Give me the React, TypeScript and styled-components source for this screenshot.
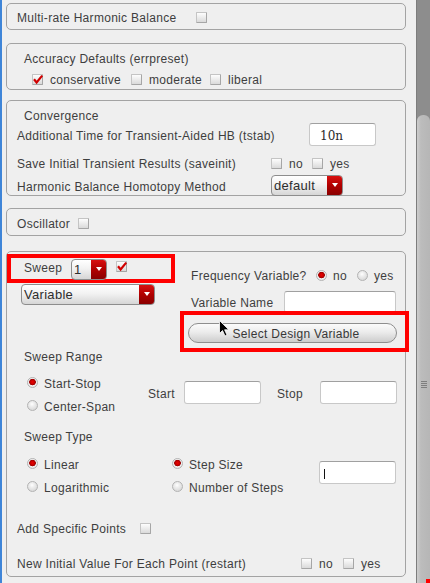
import React from "react";
import styled, { createGlobalStyle } from "styled-components";

const GlobalStyle = createGlobalStyle`
  html, body { margin: 0; padding: 0; background: #efefef; }
  body {
    font-family: "Liberation Sans", Arial, sans-serif;
    font-size: 12px;
    color: #3e3e3e;
    letter-spacing: 0.3px;
  }
  * { box-sizing: border-box; }
`;

const Screen = styled.div`
  width: 430px;
  height: 583px;
  display: flex;
  overflow: hidden;
  position: relative;
  background: #efefef;
`;

const Main = styled.div`
  width: 416px;
  flex: none;
  border-left: 2px solid #3f85d8;
  padding: 3px 0 0 4px;
  display: flex;
  flex-direction: column;
`;

const Panel = styled.div<{ $mt?: number; $pb?: number }>`
  width: 400px;
  flex: none;
  border: 1px solid #a3a3a3;
  border-radius: 5px;
  margin-top: ${(p) => p.$mt ?? 0}px;
  padding-bottom: ${(p) => p.$pb ?? 0}px;
  display: flex;
  flex-direction: column;
  position: relative;
`;

const Row = styled.div<{ $h?: number; $mt?: number; $pl?: number; $mb?: number }>`
  display: flex;
  align-items: center;
  height: ${(p) => p.$h ?? 16}px;
  margin-top: ${(p) => p.$mt ?? 0}px;
  margin-bottom: ${(p) => p.$mb ?? 0}px;
  padding-left: ${(p) => p.$pl ?? 10}px;
  flex: none;
`;

const Label = styled.span<{ $w?: number; $ml?: number }>`
  display: inline-block;
  white-space: nowrap;
  line-height: 16px;
  padding-top: 2px;
  flex: none;
  ${(p) => (p.$w !== undefined ? `width: ${p.$w}px;` : "")}
  margin-left: ${(p) => p.$ml ?? 0}px;
`;

const BoxWrap = styled.span<{ $ml?: number; $mt?: number }>`
  position: relative;
  display: inline-block;
  width: 11px;
  height: 11px;
  flex: none;
  margin-left: ${(p) => p.$ml ?? 0}px;
  margin-top: ${(p) => p.$mt ?? 0}px;
  margin-right: 7px;
  border: 1px solid #a6a6a6;
  border-top-color: #c4c4c4;
  border-left-color: #c4c4c4;
  border-radius: 1px;
  background: linear-gradient(#fdfdfd, #dadada);
`;

const CheckMark = styled.svg`
  position: absolute;
  left: 0px;
  top: 0px;
  width: 10px;
  height: 10px;
  overflow: visible;
`;

const Check = ({ checked, ml, mt }: { checked?: boolean; ml?: number; mt?: number }) => (
  <BoxWrap $ml={ml} $mt={mt}>
    {checked && (
      <CheckMark viewBox="0 0 10 10">
        <path d="M1 4.2 L3.6 7.4 L9.2 0.6" fill="none" stroke="#d00000" strokeWidth="2.2" strokeLinejoin="miter" />
      </CheckMark>
    )}
  </BoxWrap>
);

const RadioDot = styled.span<{ $on?: boolean; $ml?: number }>`
  display: inline-block;
  width: 11px;
  height: 11px;
  flex: none;
  border-radius: 50%;
  margin-left: ${(p) => p.$ml ?? 0}px;
  margin-right: 6px;
  border: 1px solid #b3b3b3;
  background: ${(p) =>
    p.$on
      ? "radial-gradient(circle at 50% 45%, #f00000 0, #c00000 2.2px, #9a0000 3px, #f4f4f4 3.6px, #d2d2d2 100%)"
      : "radial-gradient(circle at 45% 35%, #ffffff 0, #f0f0f0 2px, #cfcfcf 100%)"};
`;

const DropBox = styled.div<{ $w: number; $ml?: number; $mt?: number }>`
  display: flex;
  width: ${(p) => p.$w}px;
  height: 21px;
  flex: none;
  margin-left: ${(p) => p.$ml ?? 0}px;
  margin-top: ${(p) => p.$mt ?? 0}px;
  border: 1px solid #8d8d8d;
  border-radius: 4px;
  overflow: hidden;
  background: linear-gradient(#ffffff, #f2f2f2 45%, #d6d6d6);
`;

const DropText = styled.span`
  flex: 1;
  padding-left: 2px;
  line-height: 20px;
  font-size: 13px;
  color: #2e2e2e;
  white-space: nowrap;
  overflow: hidden;
`;

const DropArrow = styled.span`
  width: 15px;
  flex: none;
  display: flex;
  align-items: center;
  justify-content: center;
  background: linear-gradient(#d81010, #b00000 50%, #8a0000);
  &::after {
    content: "";
    display: block;
    margin-top: -2px;
    border-left: 3.5px solid transparent;
    border-right: 3.5px solid transparent;
    border-top: 4px solid #ffffff;
  }
`;

const Dropdown = ({ w, text, ml, mt }: { w: number; text: string; ml?: number; mt?: number }) => (
  <DropBox $w={w} $ml={ml} $mt={mt}>
    <DropText>{text}</DropText>
    <DropArrow />
  </DropBox>
);

const TextField = styled.div<{ $w: number; $h?: number; $ml?: number }>`
  width: ${(p) => p.$w}px;
  height: ${(p) => p.$h ?? 23}px;
  flex: none;
  margin-left: ${(p) => p.$ml ?? 0}px;
  background: #ffffff;
  border: 1px solid #c8c8c8;
  border-top-color: #a0a0a0;
  border-radius: 3px;
  font-family: "DejaVu Serif", "Liberation Serif", serif;
  font-size: 12px;
  letter-spacing: 0;
  color: #2a2a2a;
  padding: 2px 0 0 10px;
  display: flex;
  align-items: center;
`;

const Caret = styled.span`
  display: inline-block;
  width: 1px;
  height: 10px;
  margin-left: -6px;
  background: #111;
`;

const Highlight = styled.div<{ $w: number; $h: number; $mt?: number; $mr?: number }>`
  width: ${(p) => p.$w}px;
  height: ${(p) => p.$h}px;
  flex: none;
  border: 4px solid #ff0000;
  margin-top: ${(p) => p.$mt ?? 0}px;
  margin-right: ${(p) => p.$mr ?? 0}px;
  display: flex;
`;

const PillButton = styled.div`
  width: 209px;
  height: 20px;
  margin: 8px 0 0 4px;
  border: 1px solid #8e8e8e;
  border-radius: 10px;
  background: linear-gradient(#fbfbfb, #ececec 45%, #cdcdcd);
  display: flex;
  align-items: center;
  justify-content: center;
  padding-left: 7px;
  padding-top: 1px;
  line-height: 16px;
  color: #383838;
  white-space: nowrap;
`;

const Top = styled.div`
  display: flex;
  flex: none;
`;

const LeftCol = styled.div`
  width: 173px;
  flex: none;
  display: flex;
  flex-direction: column;
`;

const RightCol = styled.div`
  width: 229px;
  flex: none;
  margin-right: -5px;
  display: flex;
  flex-direction: column;
`;

const SweepRow = styled.div`
  display: flex;
  align-items: flex-start;
  padding-left: 13px;
`;

const Section = styled.div<{ $mt?: number }>`
  display: flex;
  flex: none;
  margin-top: ${(p) => p.$mt ?? 0}px;
`;

const RadioCol = styled.div<{ $w: number; $pl?: number }>`
  width: ${(p) => p.$w}px;
  flex: none;
  display: flex;
  flex-direction: column;
  padding-left: ${(p) => p.$pl ?? 20}px;
`;

const RadioRow = styled.div`
  height: 23px;
  display: flex;
  align-items: center;
`;

const FieldArea = styled.div<{ $mt: number }>`
  display: flex;
  align-items: center;
  height: 23px;
  margin-top: ${(p) => p.$mt}px;
`;

const Cursor = styled.svg`
  position: absolute;
  left: 212px;
  top: 68px;
  width: 11px;
  height: 17px;
`;

const ScrollBar = styled.div`
  width: 14px;
  flex: none;
  border-left: 1px solid #7d7d7d;
  background: #8d8d8d;
  padding-top: 115px;
  display: flex;
  flex-direction: column;
  position: relative;
`;

const Thumb = styled.div`
  flex: 1;
  background: linear-gradient(90deg, #cdcdcd, #bcbcbc 30%, #b6b6b6);
  border-radius: 6px 6px 0 0;
  display: flex;
  flex-direction: column;
  align-items: center;
  padding-top: 266px;
  gap: 1px;
`;

const Grip = styled.span`
  width: 6px;
  height: 1px;
  margin-left: 1px;
  background: #7e7e7e;
`;

const CornerMark = styled.span`
  position: absolute;
  right: 0;
  bottom: 0;
  width: 4px;
  height: 4px;
  background: #ff0000;
`;

export default function App() {
  return (
    <>
      <GlobalStyle />
      <Screen>
        <Main>
          <Panel $pb={4}>
            <Row $h={16} $mt={5} $pl={10}>
              <Label $w={179}>Multi-rate Harmonic Balance</Label>
              <Check />
            </Row>
          </Panel>

          <Panel $mt={13} $pb={2}>
            <Row $h={16} $mt={6} $pl={17}>
              <Label>Accuracy Defaults (errpreset)</Label>
            </Row>
            <Row $h={16} $mt={5} $pl={25}>
              <Check checked />
              <Label $w={81}>conservative</Label>
              <Check />
              <Label $w={61}>moderate</Label>
              <Check />
              <Label>liberal</Label>
            </Row>
          </Panel>

          <Panel $mt={10}>
            <Row $h={16} $mt={6} $pl={17}>
              <Label>Convergence</Label>
            </Row>
            <Row $h={23} $pl={10}>
              <Label $w={292}>Additional Time for Transient-Aided HB (tstab)</Label>
              <TextField $w={67}>10n</TextField>
            </Row>
            <Row $h={16} $mt={9} $pl={10}>
              <Label $w={254}>Save Initial Transient Results (saveinit)</Label>
              <Check />
              <Label $w={23}>no</Label>
              <Check />
              <Label>yes</Label>
            </Row>
            <Row $h={21} $mt={4} $mb={-1} $pl={10}>
              <Label $w={254}>Harmonic Balance Homotopy Method</Label>
              <Dropdown w={72} text="default" />
            </Row>
          </Panel>

          <Panel $mt={12} $pb={4}>
            <Row $h={16} $mt={6} $pl={10}>
              <Label $w={61}>Oscillator</Label>
              <Check />
            </Row>
          </Panel>

          <Panel $mt={15} $pb={5}>
            <Top>
              <LeftCol>
                <Highlight $w={168} $h={29} $mt={2}>
                  <SweepRow>
                    <Label $w={47}>Sweep</Label>
                    <Dropdown w={36} text="1" mt={1} />
                    <Check checked ml={9} mt={3} />
                  </SweepRow>
                </Highlight>
                <Dropdown w={134} text="Variable" ml={14} mt={1} />
              </LeftCol>
              <RightCol>
                <Row $h={20} $mt={13} $pl={11}>
                  <Label $w={125}>Frequency Variable?</Label>
                  <RadioDot $on />
                  <Label $w={24}>no</Label>
                  <RadioDot />
                  <Label>yes</Label>
                </Row>
                <Row $h={22} $mt={6} $pl={11}>
                  <Label $w={93}>Variable Name</Label>
                  <TextField $w={112} $h={22} />
                </Row>
                <Highlight $w={229} $h={41} $mt={-2}>
                  <PillButton>Select Design Variable</PillButton>
                </Highlight>
              </RightCol>
            </Top>

            <Row $h={16} $mt={-4} $pl={17}>
              <Label>Sweep Range</Label>
            </Row>
            <Section $mt={7}>
              <RadioCol $w={141}>
                <RadioRow>
                  <RadioDot $on />
                  <Label>Start-Stop</Label>
                </RadioRow>
                <RadioRow>
                  <RadioDot />
                  <Label>Center-Span</Label>
                </RadioRow>
              </RadioCol>
              <FieldArea $mt={10}>
                <Label $w={36}>Start</Label>
                <TextField $w={77} />
                <Label $w={43} $ml={16}>Stop</Label>
                <TextField $w={77} />
              </FieldArea>
            </Section>

            <Row $h={16} $mt={11} $pl={17}>
              <Label>Sweep Type</Label>
            </Row>
            <Section $mt={8}>
              <RadioCol $w={165}>
                <RadioRow>
                  <RadioDot $on />
                  <Label>Linear</Label>
                </RadioRow>
                <RadioRow>
                  <RadioDot />
                  <Label>Logarithmic</Label>
                </RadioRow>
              </RadioCol>
              <RadioCol $w={147} $pl={0}>
                <RadioRow>
                  <RadioDot $on />
                  <Label>Step Size</Label>
                </RadioRow>
                <RadioRow>
                  <RadioDot />
                  <Label>Number of Steps</Label>
                </RadioRow>
              </RadioCol>
              <FieldArea $mt={9}>
                <TextField $w={77}>
                  <Caret />
                </TextField>
              </FieldArea>
            </Section>

            <Row $h={16} $mt={22} $pl={10}>
              <Label $w={123}>Add Specific Points</Label>
              <Check />
            </Row>
            <Row $h={16} $mt={19} $pl={10}>
              <Label $w={284}>New Initial Value For Each Point (restart)</Label>
              <Check />
              <Label $w={24}>no</Label>
              <Check />
              <Label>yes</Label>
            </Row>

            <Cursor viewBox="0 0 11 17">
              <path d="M0.5 0.5 L0.5 13.5 L3.5 10.5 L6 16 L8 15 L5.6 9.8 L9.8 9.8 Z" fill="#000" stroke="#fff" strokeWidth="0.8" />
            </Cursor>
          </Panel>
        </Main>
        <ScrollBar>
          <Thumb>
            <Grip />
            <Grip />
            <Grip />
            <Grip />
          </Thumb>
          <CornerMark />
        </ScrollBar>
      </Screen>
    </>
  );
}
